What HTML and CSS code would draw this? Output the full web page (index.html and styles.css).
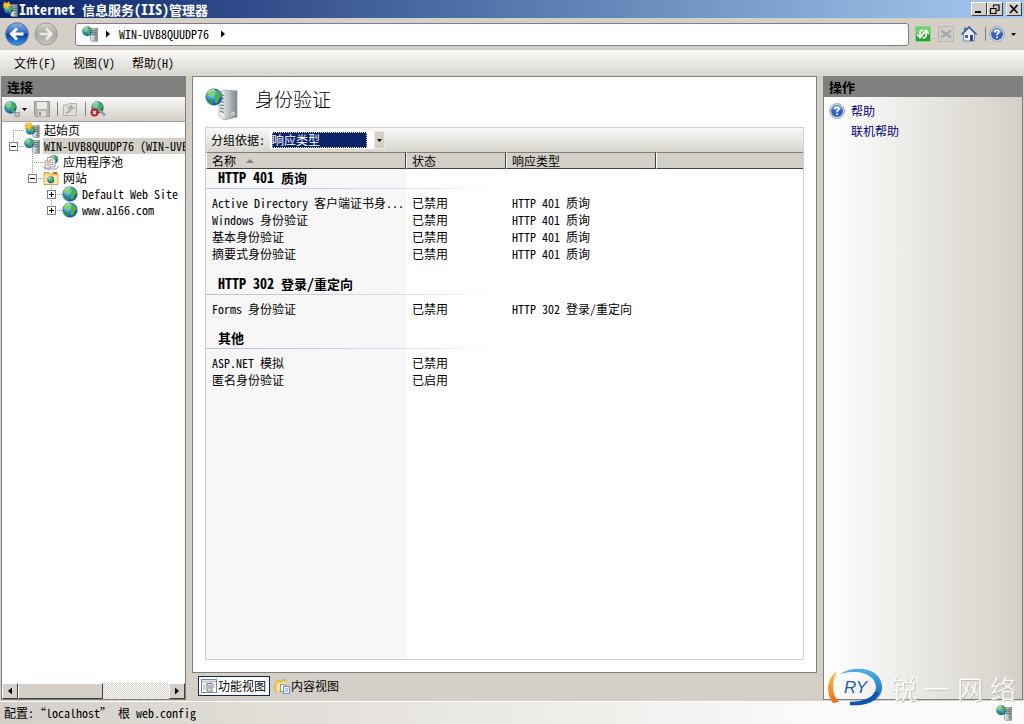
FILE: index.html
```
<!DOCTYPE html>
<html lang="zh-CN">
<head>
    <meta charset="UTF-8">
    <meta name="viewport" content="width=device-width, initial-scale=1.0">
    <title>Internet 信息服务(IIS)管理器</title>
    <link rel="stylesheet" href="styles.css">
</head>
<body>
    <svg class="defs" width="0" height="0" aria-hidden="true">
        <defs>
            <radialGradient id="sea" cx="0.35" cy="0.3" r="0.8">
                <stop offset="0" stop-color="#9fe0ff"/>
                <stop offset="0.5" stop-color="#2f86d8"/>
                <stop offset="1" stop-color="#0d3f94"/>
            </radialGradient>
            <linearGradient id="metal" x1="0" x2="1">
                <stop offset="0" stop-color="#eceeef"/>
                <stop offset="0.45" stop-color="#c4c9cc"/>
                <stop offset="1" stop-color="#7e878c"/>
            </linearGradient>
            <linearGradient id="backFill" x1="0" y1="0" x2="0" y2="1">
                <stop offset="0" stop-color="#8db7ea"/>
                <stop offset="0.48" stop-color="#2a62bd"/>
                <stop offset="0.5" stop-color="#0b3596"/>
                <stop offset="1" stop-color="#2aa5f0"/>
            </linearGradient>
            <linearGradient id="fwdFill" x1="0" y1="0" x2="0" y2="1">
                <stop offset="0" stop-color="#d6d4cf"/>
                <stop offset="0.5" stop-color="#a9a7a3"/>
                <stop offset="1" stop-color="#c9c7c2"/>
            </linearGradient>
            <linearGradient id="flame" x1="0" y1="0" x2="0" y2="1">
                <stop offset="0" stop-color="#ffc44d"/>
                <stop offset="1" stop-color="#ee6a10"/>
            </linearGradient>
            <linearGradient id="swoosh" x1="0" y1="0" x2="0" y2="1">
                <stop offset="0" stop-color="#4db4e6"/>
                <stop offset="1" stop-color="#0b55ac"/>
            </linearGradient>
        </defs>
        <symbol id="globe" viewBox="0 0 16 16">
            <circle cx="8" cy="8" r="7.3" fill="url(#sea)" stroke="#1c5a9e" stroke-width="0.5"/>
            <path d="M2 4.5Q4 1.200 8 1.200L9.500 3 7.500 5 8 7 5.500 8 4 6.500 2.200 7Z" fill="#7ed65a"/>
            <path d="M10 2.500L13.500 4 15 7.500 12.500 9 11.500 12.500 9.500 14 8.500 11 9.500 8.500 8.500 7 10.500 5Z" fill="#4cb536"/>
            <path d="M2 9.500L5 10 6.500 12 6 14.500 3.500 13Z" fill="#2f9a3a"/>
            <path d="M3 4Q5 1.800 8 1.800" fill="none" stroke="#dff6d8" stroke-width="0.8"/>
        </symbol>
        <symbol id="server" viewBox="0 0 8 14">
            <path d="M0.500 1L7.500 0.500V13.500H1.500L0.500 12.500Z" fill="url(#metal)" stroke="#798287" stroke-width="0.7"/>
            <path d="M1.500 3H6.500M1.500 5H6.500M1.500 7H6.500" stroke="#5d676d"/>
            <rect x="4.500" y="9.500" width="2" height="2" fill="#49b53e"/>
        </symbol>
        <symbol id="site" viewBox="0 0 16 16">
            <use href="#server" x="8" y="1.500" width="8" height="14.500"/>
            <use href="#globe" x="0" y="0" width="10.500" height="10.500"/>
        </symbol>
        <symbol id="start" viewBox="0 0 16 16">
            <use href="#server" x="8" y="3" width="8" height="13"/>
            <use href="#globe" x="1.500" y="3" width="10" height="10"/>
            <path d="M0.500 3L2 4 2.500 0.500 4.500 2.500 7 0.500 7.500 3 10 4 7 5 6 8 4 6 1 7 2 5Z" fill="#ffc629" stroke="#e08a10" stroke-width="0.5"/>
        </symbol>
        <symbol id="pool" viewBox="0 0 16 16">
            <use href="#globe" x="6" y="0.500" width="9.500" height="9.500"/>
            <path d="M4.500 3.500H9.500L12 6V13H4.500Z" fill="#fff" stroke="#7d8da0" stroke-width="0.8"/>
            <path d="M2 7H7V14H2Z" fill="#fff" stroke="#8c8c8c" stroke-width="0.8"/>
            <path d="M3.500 9H6M3.500 11H6M6.500 6H10M8.500 8.500H10.500M8.500 10.500H10.500" stroke="#c8553a" stroke-width="0.9"/>
            <path d="M0.500 12.500L2 15H13.500L15.500 11.500" fill="none" stroke="#8a939b"/>
        </symbol>
        <symbol id="sites" viewBox="0 0 16 16">
            <path d="M1 2.500H6L7.500 4H15V14.500H1Z" fill="#f8cf68" stroke="#c49a36" stroke-width="0.8"/>
            <path d="M1.500 5.500H14.500V14H1.500Z" fill="#fde7a0"/>
            <path d="M10 2H14V4H10Z" fill="#e9572f"/>
            <use href="#globe" x="4" y="6" width="7.500" height="7.500"/>
        </symbol>
        <symbol id="help" viewBox="0 0 16 16">
            <circle cx="8" cy="8" r="7.400" fill="#dfe4ee" stroke="#8890a2" stroke-width="0.8"/>
            <circle cx="8" cy="8" r="6" fill="#3560bb"/>
            <path d="M3 6Q4 2.500 8 2.500T13 6Q8 8 3 6Z" fill="#7ea3e4"/>
            <path d="M6 6.300Q6 4.300 8 4.300T10 6.100C10 7.500 8 7.500 8 9.200" fill="none" stroke="#fff" stroke-width="1.600"/>
            <rect x="7.200" y="10.400" width="1.700" height="1.700" fill="#fff"/>
        </symbol>
    </svg>

    <header class="titlebar">
        <svg class="icon" viewBox="0 0 16 16"><use href="#start"/></svg>
        <h1><span class="latin">Internet </span>信息服务<span class="latin">(IIS)</span>管理器</h1>
        <div class="window-buttons">
            <button type="button" aria-label="最小化"><svg viewBox="0 0 12 10"><path d="M2 8H8" stroke="#000" stroke-width="2"/></svg></button>
            <button type="button" aria-label="还原"><svg viewBox="0 0 12 10"><path d="M4 1H10.500M4.500 1V3.500M10 1V6.500H8M1 4.500H7.500M1.500 4V9.500H7V4" fill="none" stroke="#000" stroke-width="1.200"/></svg></button>
            <button type="button" class="close" aria-label="关闭"><svg viewBox="0 0 12 10"><path d="M2 1L9.500 9M9.500 1L2 9" stroke="#000" stroke-width="1.600"/></svg></button>
        </div>
    </header>

    <div class="navbar">
        <div class="history">
            <button type="button" aria-label="后退">
                <svg viewBox="0 0 24 24"><circle cx="12" cy="12" r="11.300" fill="url(#backFill)" stroke="#5a6f94"/><path d="M18.500 12H7M12 6.500L6.500 12L12 17.500" fill="none" stroke="#fff" stroke-width="3"/></svg>
            </button>
            <button type="button" aria-label="前进">
                <svg viewBox="0 0 24 24"><circle cx="12" cy="12" r="11" fill="url(#fwdFill)" stroke="#9b9994"/><path d="M5.500 12H17M12 6.500L17.500 12L12 17.500" fill="none" stroke="#eceae6" stroke-width="2.600"/></svg>
            </button>
        </div>
        <nav class="address">
            <svg class="icon" viewBox="0 0 16 16"><use href="#site"/></svg>
            <svg class="arrow" viewBox="0 0 4 8"><path d="M0 0.500L4 4L0 7.500Z"/></svg>
            <a href="#">WIN-UVB8QUUDP76</a>
            <svg class="arrow" viewBox="0 0 4 8"><path d="M0 0.500L4 4L0 7.500Z"/></svg>
        </nav>
        <div class="nav-tools">
            <button type="button" aria-label="刷新">
                <svg viewBox="0 0 16 16"><rect x="0.500" y="0.500" width="15" height="15" fill="#27a52f" stroke="#8fd18f"/><path d="M1 1H15V6Q8 9 1 7Z" fill="#6fd070"/><path d="M8.500 4.500Q5 3.500 5 7V10.500M2 8L5 11.500L8 8M7.500 11.500Q11 12.500 11 9V5.500M8 8L11 4.500L14 8" fill="none" stroke="#fff" stroke-width="1.800"/></svg>
            </button>
            <button type="button" aria-label="停止" disabled>
                <svg viewBox="0 0 16 16"><rect x="0.500" y="0.500" width="15" height="15" fill="#d0cecb" stroke="#b9b7b2"/><path d="M3 4.500L13 11.500M13 4.500L3 11.500" stroke="#a9a7a6" stroke-width="2.200"/></svg>
            </button>
            <button type="button" aria-label="主页">
                <svg viewBox="0 0 16 16"><path d="M2.500 7.500L8 2L13.500 7.500V15H2.500Z" fill="#e9f0fb" stroke="#6f86b8"/><path d="M3 1.500H5V5L3 6.500Z" fill="#4868b0"/><path d="M0.500 8.500L8 1L15.500 8.500" fill="none" stroke="#3f5fae" stroke-width="1.600"/><rect x="4" y="9" width="3" height="3" fill="#52658c"/><rect x="9" y="9" width="3" height="6" fill="#39486e"/></svg>
            </button>
            <span class="divider"></span>
            <button type="button" class="help-menu" aria-label="帮助">
                <svg viewBox="0 0 16 16"><use href="#help"/></svg>
                <svg class="caret" viewBox="0 0 5 3"><path d="M0 0H5L2.500 3Z"/></svg>
            </button>
        </div>
    </div>

    <div class="menubar">
        <button type="button">文件(F)</button>
        <button type="button">视图(V)</button>
        <button type="button">帮助(H)</button>
    </div>

    <main class="workspace">
        <section class="panel connections">
            <h2>连接</h2>
            <div class="panel-tools">
                <button type="button" aria-label="连接">
                    <svg viewBox="0 0 16 16"><use href="#globe" x="0" y="0" width="13" height="13"/><path d="M9 9.500L12 12.500" stroke="#808a96" stroke-width="2"/><rect x="11" y="11.500" width="4.500" height="4" fill="#b9c1c9" stroke="#7c8690" stroke-width="0.700"/></svg>
                    <svg class="caret" viewBox="0 0 5 3"><path d="M0 0H5L2.500 3Z"/></svg>
                </button>
                <button type="button" class="save" aria-label="保存" disabled>
                    <svg viewBox="0 0 16 16"><path d="M0.500 0.500H15.500V15.500H1.500L0.500 14.500Z" fill="#b5b3b0" stroke="#9a9895"/><rect x="3" y="1" width="10" height="7" fill="#eae9e6"/><rect x="4" y="10" width="8" height="5.500" fill="#dddbd8"/><rect x="5" y="11" width="2" height="3.500" fill="#8f8d8a"/></svg>
                </button>
                <span class="divider"></span>
                <button type="button" class="up" aria-label="向上" disabled>
                    <svg viewBox="0 0 16 16"><path d="M1.500 4H6L7 2.500H14.500V14.500H1.500Z" fill="#dedcd8" stroke="#b4b2ae"/><path d="M4 12Q9 11 9 6M6 8L9 5L12 8" fill="none" stroke="#aaa8a5" stroke-width="1.600"/></svg>
                </button>
                <span class="divider"></span>
                <button type="button" aria-label="断开连接">
                    <svg viewBox="0 0 16 16"><use href="#globe" x="1" y="0" width="13" height="13"/><path d="M10 9.500L15 14.500" stroke="#909ba8" stroke-width="2.600"/><circle cx="4.500" cy="11.500" r="4" fill="#c81e1e"/><path d="M3 10L6 13M6 10L3 13" stroke="#fff" stroke-width="1.200"/></svg>
                </button>
            </div>
            <ul class="tree">
                <li>
                    <div class="node"><span class="branch"></span><svg class="icon" viewBox="0 0 16 16"><use href="#start"/></svg><a href="#">起始页</a></div>
                </li>
                <li>
                    <div class="node selected"><span class="branch"><button type="button" class="toggle" aria-label="折叠"></button></span><svg class="icon" viewBox="0 0 16 16"><use href="#site"/></svg><a href="#">WIN-UVB8QUUDP76 (WIN-UVB8QUUDP76\Administrator)</a></div>
                    <ul>
                        <li>
                            <div class="node"><span class="branch"></span><svg class="icon" viewBox="0 0 16 16"><use href="#pool"/></svg><a href="#">应用程序池</a></div>
                        </li>
                        <li>
                            <div class="node"><span class="branch"><button type="button" class="toggle" aria-label="折叠"></button></span><svg class="icon" viewBox="0 0 16 16"><use href="#sites"/></svg><a href="#">网站</a></div>
                            <ul>
                                <li>
                                    <div class="node"><span class="branch"><button type="button" class="toggle closed" aria-label="展开"></button></span><svg class="icon" viewBox="0 0 16 16"><use href="#globe"/></svg><a href="#">Default Web Site</a></div>
                                </li>
                                <li>
                                    <div class="node"><span class="branch"><button type="button" class="toggle closed" aria-label="展开"></button></span><svg class="icon" viewBox="0 0 16 16"><use href="#globe"/></svg><a href="#">www.a166.com</a></div>
                                </li>
                            </ul>
                        </li>
                    </ul>
                </li>
            </ul>
            <div class="scrollbar">
                <button type="button" aria-label="向左滚动"><svg class="arrow" viewBox="0 0 4 8"><path d="M4 0.500L0 4L4 7.500Z"/></svg></button>
                <span class="thumb"></span>
                <button type="button" aria-label="向右滚动"><svg class="arrow" viewBox="0 0 4 8"><path d="M0 0.500L4 4L0 7.500Z"/></svg></button>
            </div>
        </section>

        <section class="feature">
            <div class="feature-page">
                <div class="feature-title">
                    <svg viewBox="0 0 34 34">
                        <path d="M14 6L19 3L32 4V30L19 33L14 29Z" fill="url(#metal)" stroke="#8c9499" stroke-width="0.700"/>
                        <path d="M19 3.500L14.500 6V29L19 32.500Z" fill="#e3e7e9"/>
                        <path d="M15 9L19 8M15 12L19 11.500M15 15H19M15 18L19 18.500M15 21L19 22M15 24L19 25.500" stroke="#656f75"/>
                        <path d="M26 26L30 25M26 28L30 27" stroke="#e8ebed"/>
                        <use href="#globe" x="0" y="1" width="18" height="18"/>
                    </svg>
                    <h2>身份验证</h2>
                </div>
                <div class="listing">
                    <div class="groupbar">
                        <label for="groupBy">分组依据:</label>
                        <div class="combo">
                            <select id="groupBy">
                                <option selected>响应类型</option>
                                <option>状态</option>
                                <option>不进行分组</option>
                            </select>
                            <span class="combo-arrow"><svg class="caret" viewBox="0 0 5 3"><path d="M0 0H5L2.500 3Z"/></svg></span>
                        </div>
                    </div>
                    <table>
                        <colgroup><col class="col-name"><col class="col-state"><col class="col-type"><col></colgroup>
                        <thead>
                            <tr>
                                <th scope="col">名称<svg class="sort" viewBox="0 0 8 4"><path d="M0 4L4 0L8 4Z"/></svg></th>
                                <th scope="col">状态</th>
                                <th scope="col">响应类型</th>
                                <th></th>
                            </tr>
                        </thead>
                        <tbody>
                            <tr class="group"><th colspan="4"><span class="latin">HTTP 401 </span>质询</th></tr>
                            <tr><td>Active Directory 客户端证书身...</td><td>已禁用</td><td>HTTP 401 质询</td><td></td></tr>
                            <tr><td>Windows 身份验证</td><td>已禁用</td><td>HTTP 401 质询</td><td></td></tr>
                            <tr><td>基本身份验证</td><td>已禁用</td><td>HTTP 401 质询</td><td></td></tr>
                            <tr><td>摘要式身份验证</td><td>已禁用</td><td>HTTP 401 质询</td><td></td></tr>
                        </tbody>
                        <tbody>
                            <tr class="group"><th colspan="4"><span class="latin">HTTP 302 </span>登录<span class="latin">/</span>重定向</th></tr>
                            <tr><td>Forms 身份验证</td><td>已禁用</td><td>HTTP 302 登录/重定向</td><td></td></tr>
                        </tbody>
                        <tbody>
                            <tr class="group"><th colspan="4">其他</th></tr>
                            <tr><td>ASP.NET 模拟</td><td>已禁用</td><td></td><td></td></tr>
                            <tr><td>匿名身份验证</td><td>已启用</td><td></td><td></td></tr>
                        </tbody>
                    </table>
                </div>
            </div>
            <div class="view-tabs">
                <button type="button" class="active">
                    <svg class="icon" viewBox="0 0 16 16"><rect x="0.500" y="1.500" width="15" height="13" fill="#fff" stroke="#7d8794"/><path d="M1 3.500H15" stroke="#b8c4d4" stroke-width="2"/><path d="M2 7H4.500M2 9H4.500M2 11H4.500M12 7H14M12 9H14" stroke="#9aa3ad"/><rect x="6" y="5.500" width="5" height="7.500" fill="#eef1f5" stroke="#6f7987"/><path d="M7 8H10M7 10H10" stroke="#6f7987"/></svg>功能视图
                </button>
                <button type="button">
                    <svg class="icon" viewBox="0 0 16 16"><path d="M1 5L4 2L6 3.500L11 1V9L3 14L1 13Z" fill="#f7cf66" stroke="#cf9f38" stroke-width="0.800"/><path d="M3 6L12 4V9L3 14Z" fill="#fde49a"/><rect x="6.500" y="6.500" width="5" height="7" fill="#fff" stroke="#6b86ad" stroke-width="0.800"/><rect x="9.500" y="8.500" width="6" height="7" fill="#eef5ff" stroke="#5d7fb4" stroke-width="0.800"/><path d="M11 11H14M11 13H14" stroke="#5d7fb4" stroke-width="0.800"/></svg>内容视图
                </button>
            </div>
        </section>

        <section class="panel actions">
            <h2>操作</h2>
            <div class="actions-body">
                <a href="#"><svg class="icon" viewBox="0 0 16 16"><use href="#help"/></svg>帮助</a>
                <a href="#" class="sub">联机帮助</a>
            </div>
        </section>
    </main>

    <footer class="statusbar">
        <span>配置:“localhost” 根 web.config</span>
        <svg class="icon" viewBox="0 0 16 16"><use href="#site"/></svg>
    </footer>

    <div class="brand">
        <svg viewBox="0 0 56 40">
            <path d="M9 3C-1 10-3 25 5 35L11 34Q5 28 5 19Q5 11 9 3Z" fill="url(#flame)"/>
            <path d="M12 6C26-3 52-1 54 18C55 31 40 39 22 37V34C36 35 48 28 48 19C47 5 28 1 12 6Z" fill="url(#swoosh)"/>
            <path d="M17 6Q34 1 46 13" fill="none" stroke="#eaf6fc" stroke-width="1.200"/>
            <path d="M22 35.500Q44 35 49 24" fill="none" stroke="#0b55ac" stroke-width="3.500"/>
            <text x="16" y="25">RY</text>
        </svg>
        <div class="brand-name"><span>锐</span><span>一</span><span>网</span><span>络</span></div>
    </div>
</body>
</html>
```
FILE: styles.css
```
* {
    box-sizing: border-box;
}

body {
    margin: 0;
    min-height: 100vh;
    display: flex;
    flex-direction: column;
    background: #d4d0c8;
    color: #000;
    font-family: "Noto Sans CJK SC", sans-serif;
    font-size: 12px;
    line-height: 16px;
    /* half-width latin, so two letters take one hanzi */
    font-feature-settings: "hwid", "liga" 0;
}

h1, h2, ul {
    margin: 0;
    padding: 0;
}

button, select {
    font: inherit;
    font-feature-settings: inherit;
    color: inherit;
    margin: 0;
    padding: 0;
    border: 0;
    border-radius: 0;
    background: none;
}

button {
    display: flex;
    align-items: center;
}

a {
    color: inherit;
    text-decoration: none;
}

svg {
    display: block;
    flex: none;
}

.defs {
    position: absolute;
}

.icon {
    width: 16px;
    height: 16px;
}

.arrow {
    width: 4px;
    height: 8px;
}

.caret {
    width: 5px;
    height: 3px;
}

.latin {
    font-size: 14px;
}

.divider {
    width: 1px;
    height: 14px;
    background: #808080;
}

/* title bar */
.titlebar {
    display: flex;
    align-items: center;
    gap: 1px;
    height: 18px;
    padding: 0 2px;
    background: linear-gradient(to right, #0a246a, #a6caf0);
    color: #fff;
}

.titlebar h1 {
    flex: 1;
    font-size: 13px;
    line-height: 18px;
    white-space: pre;
}

.window-buttons {
    display: flex;
}

.window-buttons button {
    width: 16px;
    height: 14px;
    justify-content: center;
    background: #d4d0c8;
    border: 1px solid;
    border-color: #fff #404040 #404040 #fff;
}

.window-buttons svg {
    width: 12px;
    height: 10px;
}

.window-buttons .close {
    margin-left: 3px;
}

/* navigation */
.navbar {
    display: flex;
    align-items: center;
    height: 32px;
    padding: 0 8px 0 5px;
}

.history {
    display: flex;
    gap: 5px;
}

.history svg {
    width: 24px;
    height: 24px;
}

.address {
    flex: 1;
    display: flex;
    align-items: center;
    gap: 8px;
    height: 23px;
    margin-left: 17px;
    padding-left: 6px;
    background: #fff;
    border: 1px solid #808080;
    border-radius: 3px;
}

.address a {
    padding: 0 1px;
}

.address .arrow:last-child {
    margin-left: 3px;
}

.nav-tools {
    display: flex;
    align-items: center;
    gap: 7px;
    padding-left: 6px;
}

.nav-tools svg:not(.caret) {
    width: 16px;
    height: 16px;
}

.nav-tools .divider {
    margin: 0 -4px 0 1px;
}

.help-menu {
    gap: 6px;
}

.menubar {
    display: flex;
    gap: 17px;
    height: 26px;
    padding: 0 14px;
    background: linear-gradient(#faf9f8, #d8d5cd);
}

/* columns */
.workspace {
    flex: 1;
    display: grid;
    grid-template-columns: 185px 1fr 200px;
    gap: 6px;
    padding: 0 1px 1px;
}

.panel {
    display: flex;
    flex-direction: column;
    min-width: 0;
    border: 1px solid #808080;
}

.panel h2 {
    padding: 1px 5px;
    background: #808080;
    font-size: 13px;
    line-height: 18px;
}

.panel-tools {
    display: flex;
    align-items: center;
    gap: 7px;
    height: 25px;
    padding-left: 2px;
    background: linear-gradient(#faf9f8, #d4d0c8);
    border-bottom: 1px solid #a5a29b;
}

.panel-tools button {
    gap: 2px;
}

.panel-tools .divider {
    margin-right: -3px;
}

.panel-tools svg:not(.caret) {
    width: 16px;
    height: 16px;
}

.connections {
    background: #fff;
}

.tree {
    flex: 1;
    padding: 0 0 0 7px;
    overflow: hidden;
    list-style: none;
}

.tree ul {
    margin-left: 19px;
    list-style: none;
}

.tree li {
    background: repeating-linear-gradient(#999 0 1px, transparent 1px 2px) 4px 0 / 1px 100% no-repeat;
}

.tree > li:first-child {
    background-position: 4px 8px;
}

.tree li:last-child {
    background-size: 1px 8px;
}

.node {
    display: flex;
    align-items: center;
    height: 16px;
    white-space: nowrap;
}

.node .icon {
    margin-right: 3px;
}

.node a {
    padding: 0 1px;
}

.selected a {
    background: #d4d0c8;
}

.branch {
    flex: none;
    display: flex;
    align-items: center;
    width: 15px;
    height: 16px;
    background: repeating-linear-gradient(to right, #999 0 1px, transparent 1px 2px) 4px 8px / 11px 1px no-repeat;
}

.toggle {
    width: 9px;
    height: 9px;
    border: 1px solid #808080;
    background: linear-gradient(#000, #000) 1px 3px / 5px 1px no-repeat #fff;
}

.toggle.closed {
    background: linear-gradient(#000, #000) 1px 3px / 5px 1px no-repeat, linear-gradient(#000, #000) 3px 1px / 1px 5px no-repeat, #fff;
}

.scrollbar {
    display: flex;
    height: 16px;
    background: repeating-conic-gradient(#d4d0c8 0 25%, #fff 0 50%) 0 0 / 2px 2px;
}

.scrollbar button, .thumb {
    width: 16px;
    justify-content: center;
    background: #d4d0c8;
    border: 1px solid;
    border-color: #fff #404040 #404040 #fff;
}

.scrollbar .thumb {
    width: 85px;
    margin-right: auto;
}

/* feature page */
.feature {
    display: flex;
    flex-direction: column;
    min-width: 0;
}

.feature-page {
    flex: 1;
    display: flex;
    flex-direction: column;
    padding: 10px 12px 12px;
    background: #fff;
    border: 1px solid #808080;
}

.feature-title {
    display: flex;
    gap: 16px;
    height: 40px;
}

.feature-title svg {
    width: 34px;
    height: 34px;
}

.feature-title h2 {
    font-size: 19px;
    font-weight: 300;
    line-height: 23px;
}

.listing {
    flex: 1;
    border: 1px solid #d4d0c8;
    background: linear-gradient(#f7f7f7, #f7f7f7) 0 0 / 200px 100% no-repeat;
}

.groupbar {
    display: flex;
    align-items: center;
    gap: 5px;
    height: 24px;
    padding-left: 5px;
    background: linear-gradient(#faf9f8, #d8d5cd);
}

.combo {
    display: flex;
    height: 18px;
    background: #fff;
}

.combo select {
    appearance: none;
    width: 95px;
    height: 16px;
    margin: 1px 7px 1px 2px;
    background: #0a246a;
    color: #fff;
    line-height: 16px;
    outline: 1px dotted #f5db95;
    outline-offset: -1px;
}

.combo-arrow {
    display: flex;
    align-items: center;
    justify-content: center;
    width: 11px;
    background: #d4d0c8;
    border: 1px solid #ece9e4;
}

table {
    width: 100%;
    table-layout: fixed;
    border-collapse: separate;
    border-spacing: 0;
}

.col-name {
    width: 200px;
}

.col-state {
    width: 100px;
}

.col-type {
    width: 150px;
}

thead th {
    height: 17px;
    padding: 0 5px;
    background: #d4d0c8;
    border: 1px solid;
    border-color: #808080 #404040 #404040 #fff;
    font-weight: normal;
    line-height: 15px;
    text-align: left;
}

thead th:last-child {
    border-right: 0;
}

.sort {
    display: inline-block;
    width: 8px;
    height: 4px;
    margin-left: 10px;
    vertical-align: 3px;
    fill: #808080;
}

.group th {
    padding: 13px 12px 3px;
    border-bottom: 5px solid transparent;
    background: linear-gradient(to right, #a9c3e0, #d5dfea 200px, transparent) 0 100% / 290px 1px no-repeat padding-box;
    font-size: 13px;
    line-height: 16px;
    text-align: left;
    white-space: pre;
}

tbody:first-of-type .group th {
    padding-top: 0;
}

td {
    height: 17px;
    padding: 0 0 0 6px;
    line-height: 17px;
    white-space: nowrap;
}

.view-tabs {
    display: flex;
    gap: 1px;
    padding: 3px 6px 4px;
}

.view-tabs button {
    height: 20px;
    gap: 1px;
    padding: 0 2px;
    border: 1px solid transparent;
}

.view-tabs .active {
    padding-right: 3px;
    background: #fff;
    border-color: #0a246a;
}

/* actions */
.actions-body {
    flex: 1;
    display: flex;
    flex-direction: column;
    gap: 4px;
    padding: 6px 5px;
    background: linear-gradient(to right, #fff, #d4d0c8);
    color: #00007f;
}

.actions-body a {
    display: flex;
    gap: 6px;
}

.actions-body .sub {
    padding-left: 22px;
}

.statusbar {
    display: flex;
    align-items: center;
    justify-content: space-between;
    height: 23px;
    padding: 0 12px 0 4px;
    background: linear-gradient(to right, #d4d0c8, #fbfaf9 80%);
    border-top: 1px solid #fff;
}

/* brand mark floats over the lower right corner */
.brand {
    position: absolute;
    right: 8px;
    bottom: 16px;
    display: flex;
    align-items: center;
    gap: 7px;
}

.brand svg {
    width: 56px;
    height: 40px;
}

.brand text {
    font-family: "Liberation Sans", sans-serif;
    font-size: 17px;
    font-style: italic;
    fill: #1a5fae;
}

.brand-name {
    display: flex;
    gap: 7px;
    color: #fff;
    font-size: 26px;
    font-weight: 300;
    line-height: 32px;
    text-shadow: 1px 1px 0 #c4c1bb;
}
```
